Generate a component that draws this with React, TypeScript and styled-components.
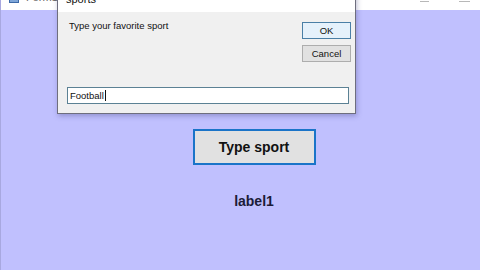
import styled, { createGlobalStyle } from "styled-components";

const GlobalStyle = createGlobalStyle`
  html, body {
    margin: 0;
    padding: 0;
    width: 480px;
    height: 270px;
    overflow: hidden;
    background: #c0c0fe;
  }
  * {
    box-sizing: border-box;
  }
`;

const Desktop = styled.div`
  position: relative;
  width: 480px;
  height: 270px;
  overflow: hidden;
  background: #c0c0fe;
  font-family: "Liberation Sans", Arial, sans-serif;
`;

const MainWindow = styled.div`
  display: flex;
  flex-direction: column;
  height: 100%;
  border-left: 1px solid #a8a8e0;
`;

const TitleBar = styled.div`
  height: 10px;
  background: #ffffff;
  display: flex;
  align-items: flex-start;
  overflow: hidden;
  padding: 0 0 0 8px;
`;

const AppIcon = styled.div`
  width: 10px;
  height: 3px;
  background: #7fa6d8;
  border: 1px solid #3d6aa8;
  border-top: none;
  margin-right: 7px;
`;

const TitleText = styled.span`
  font-size: 11px;
  line-height: 11px;
  color: #666;
  margin-top: -8px;
`;

const TitleControls = styled.div`
  margin-left: auto;
  display: flex;
  gap: 30px;
  padding-right: 10px;
`;

const ControlGlyph = styled.span<{ $w: number }>`
  display: block;
  width: ${(p) => p.$w}px;
  height: 2px;
  border-bottom: 1px solid #b8b8b8;
`;

const ClientArea = styled.div`
  flex: 1;
  display: flex;
  flex-direction: column;
  align-items: center;
  padding-top: 119px;
  padding-left: 27px;
`;

const BigButton = styled.button`
  width: 123px;
  height: 36px;
  background: #e1e1e1;
  border: 2px solid #1a74c8;
  font-family: "Liberation Sans", Arial, sans-serif;
  font-weight: bold;
  font-size: 14px;
  color: #111;
  padding: 0;
`;

const Label = styled.div`
  margin-top: 28px;
  font-weight: bold;
  font-size: 14px;
  color: #1c1c38;
`;

const Dialog = styled.div`
  position: absolute;
  left: 57px;
  top: -12px;
  width: 299px;
  height: 126px;
  display: flex;
  flex-direction: column;
  border: 1px solid #6e6e7e;
  border-top: none;
  background: #f0f0f0;
  box-shadow: 1px 2px 5px rgba(60, 60, 120, 0.35);
`;

const DialogTitle = styled.div`
  height: 24px;
  background: #ffffff;
  display: flex;
  align-items: flex-end;
  padding: 0 12px 7px 8px;
  font-size: 11px;
  color: #111;
`;

const CloseGlyph = styled.span`
  margin-left: auto;
  font-size: 12px;
  color: #333;
  margin-bottom: 5px;
`;

const DialogBody = styled.div`
  flex: 1;
  display: flex;
  flex-direction: column;
  padding: 9px 8px 0 9px;
`;

const TopRow = styled.div`
  display: flex;
  justify-content: space-between;
`;

const Prompt = styled.div`
  font-size: 9.5px;
  color: #111;
  margin-top: -1px;
  padding-left: 2px;
`;

const ButtonColumn = styled.div`
  display: flex;
  flex-direction: column;
  gap: 6px;
  padding-top: 1px;
  margin-right: -4px;
`;

const DialogButton = styled.button<{ $default?: boolean }>`
  width: 49px;
  height: 17px;
  padding: 0;
  font-family: "Liberation Sans", Arial, sans-serif;
  font-size: 9.5px;
  color: #111;
  background: ${(p) => (p.$default ? "#e5f1fb" : "#e1e1e1")};
  border: 1px solid ${(p) => (p.$default ? "#4a7fa6" : "#adadad")};
`;

const TextBox = styled.div`
  margin-top: 25px;
  width: 282px;
  height: 17px;
  background: #ffffff;
  border: 1px solid #5b8194;
  display: flex;
  align-items: center;
  padding-left: 2px;
  font-size: 9.5px;
  color: #111;
`;

const Caret = styled.span`
  display: inline-block;
  width: 1px;
  height: 11px;
  background: #111;
  margin-left: 1px;
`;

export default function App() {
  return (
    <>
      <GlobalStyle />
      <Desktop>
        <MainWindow>
          <TitleBar>
            <AppIcon />
            <TitleText>Form1</TitleText>
            <TitleControls>
              <ControlGlyph $w={9} />
              <ControlGlyph $w={11} />
            </TitleControls>
          </TitleBar>
          <ClientArea>
            <BigButton>Type sport</BigButton>
            <Label>label1</Label>
          </ClientArea>
        </MainWindow>
        <Dialog>
          <DialogTitle>
            <span>sports</span>
            <CloseGlyph>✕</CloseGlyph>
          </DialogTitle>
          <DialogBody>
            <TopRow>
              <Prompt>Type your favorite sport</Prompt>
              <ButtonColumn>
                <DialogButton $default>OK</DialogButton>
                <DialogButton>Cancel</DialogButton>
              </ButtonColumn>
            </TopRow>
            <TextBox>
              Football
              <Caret />
            </TextBox>
          </DialogBody>
        </Dialog>
      </Desktop>
    </>
  );
}
